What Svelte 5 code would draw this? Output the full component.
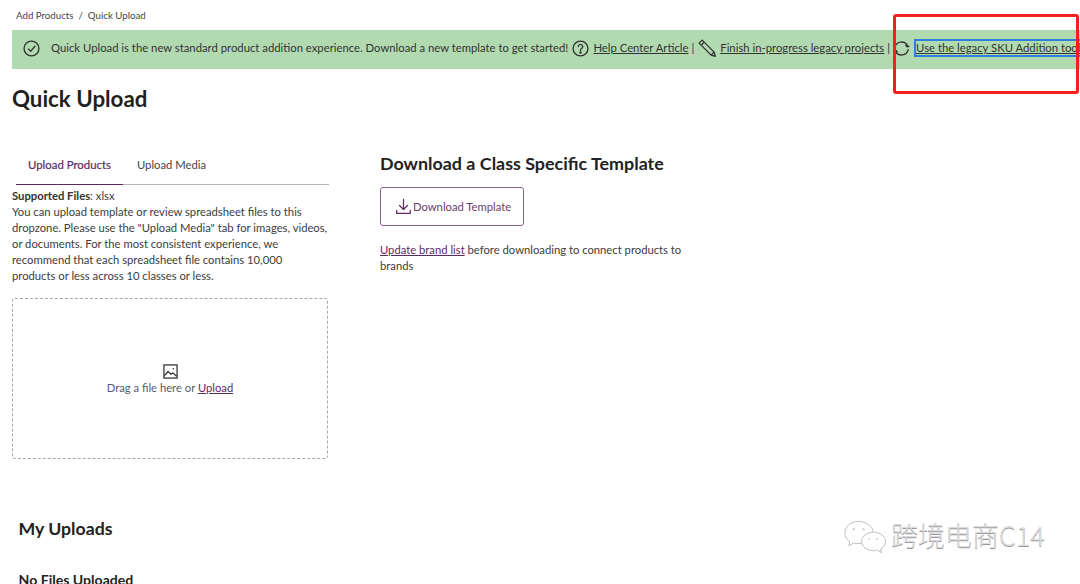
<script lang="ts">
  let activeTab = $state('products');
</script>

<div class="page">
  <nav class="crumbs">Add Products<span class="sep">/</span>Quick Upload</nav>

  <div class="banner">
    <svg class="ic check" viewBox="0 0 24 24" fill="none" stroke="currentColor" stroke-width="1.9" aria-hidden="true">
      <circle cx="12" cy="12" r="10.500"></circle>
      <polyline points="7.500 12.500 10.800 15.800 16.800 8.800" stroke-linecap="round" stroke-linejoin="round"></polyline>
    </svg>
    <span class="msg">Quick Upload is the new standard product addition experience. Download a new template to get started!</span>
    <svg class="ic help" viewBox="0 0 24 24" fill="none" stroke="currentColor" stroke-width="1.9" aria-hidden="true">
      <circle cx="12" cy="12" r="10.500"></circle>
      <path d="M8.900 9.300a3.100 3.100 0 1 1 4.700 2.700c-1 .6-1.600 1.200-1.600 2.600" stroke-linecap="round"></path>
      <circle cx="12" cy="17.800" r="0.800" fill="currentColor"></circle>
    </svg>
    <a href="#help" class="blink">Help Center Article</a>
    <span class="pipe">|</span>
    <svg class="ic pencil" viewBox="0 0 24 24" fill="none" stroke="currentColor" stroke-width="1.8" stroke-linejoin="round" aria-hidden="true">
      <path d="M1.500 5.500 5.500 1.500 21.500 17.500 23 23 17.500 21.500z"></path>
      <path d="M4 8.500 8.500 4M17.500 21.500l4-4"></path>
    </svg>
    <a href="#finish" class="blink">Finish in-progress legacy projects</a>
    <span class="pipe">|</span>
    <svg class="ic sync" viewBox="0 0 24 24" fill="none" stroke="currentColor" stroke-width="1.9" stroke-linecap="round" stroke-linejoin="round" aria-hidden="true">
      <path d="M2.500 10.500A9.700 9.700 0 0 1 20.500 8"></path>
      <path d="M21.500 13.500A9.700 9.700 0 0 1 3.500 16"></path>
      <polyline points="22.500 9 20 9.500 18 7.500"></polyline>
      <polyline points="1.500 15 4 14.500 6 16.500"></polyline>
    </svg>
    <a href="#legacy" class="blink focused">Use the legacy SKU Addition tool</a>
  </div>

  <h1>Quick Upload</h1>

  <div class="columns">
    <section class="left">
      <div class="tabs">
        <button class="tab" class:on={activeTab === 'products'} onclick={() => (activeTab = 'products')}>Upload Products</button>
        <button class="tab" class:on={activeTab === 'media'} onclick={() => (activeTab = 'media')}>Upload Media</button>
      </div>
      <div class="copy">
        <p><strong>Supported Files</strong>: xlsx</p>
        <p>You can upload template or review spreadsheet files to this dropzone. Please use the "Upload Media" tab for images, videos, or documents. For the most consistent experience, we recommend that each spreadsheet file contains 10,000 products or less across 10 classes or less.</p>
      </div>
      <div class="drop">
        <svg class="img-ic" viewBox="0 0 16 16" fill="none" stroke="#2b2b2b" stroke-width="1.300" aria-hidden="true">
          <rect x="1" y="1" width="14" height="14"></rect>
          <path d="M1.500 12.500 5.500 8l3 3 2-1.500 4 3.500" stroke-linejoin="round"></path>
          <circle cx="11" cy="5" r="0.800" fill="#2b2b2b" stroke="none"></circle>
        </svg>
        <span>Drag a file here or <a href="#upload" class="plink">Upload</a></span>
      </div>
    </section>

    <section class="right">
      <h2>Download a Class Specific Template</h2>
      <button class="dl">
        <svg viewBox="0 0 18 18" fill="none" stroke="#5f2a62" stroke-width="1.300" stroke-linecap="round" stroke-linejoin="round" aria-hidden="true">
          <path d="M9 1.500v10.500M4.800 8 9 12.200 13.200 8"></path>
          <path d="M1.800 13v3.200h14.400V13"></path>
        </svg>
        Download Template
      </button>
      <p class="note"><a href="#brands" class="plink">Update brand list</a> before downloading to connect products to brands</p>
    </section>
  </div>

  <h2 class="mine">My Uploads</h2>
  <h3>No Files Uploaded</h3>

  <div class="redbox"></div>
  <div class="mark">
    <svg viewBox="0 0 44 36" fill="#fff" stroke="#bdbdbd" stroke-width="1" aria-hidden="true">
      <path d="M15 2C7 2 1 7 1 14c0 4 2 7 5 9l-1 4 5-3c2 .6 3 .7 5 .7 8 0 15-5 15-11S23 2 15 2z"></path>
      <path d="M30 13c-6.500 0-12 4.300-12 9.500S23.500 32 30 32c1.500 0 3-.3 4-.6l4.500 2.600-1-3.700c3-1.800 5-4.700 5-7.800C42.500 17.300 36.500 13 30 13z"></path>
      <circle cx="10" cy="10" r="1.200" stroke="none" fill="#cfcfcf"></circle>
      <circle cx="20" cy="10" r="1.200" stroke="none" fill="#cfcfcf"></circle>
      <circle cx="26" cy="20" r="1" stroke="none" fill="#cfcfcf"></circle>
      <circle cx="34" cy="20" r="1" stroke="none" fill="#cfcfcf"></circle>
    </svg>
    <span>跨境电商C14</span>
  </div>
</div>

<style>
  :global(body) {
    margin: 0;
    background: #fff;
  }

  .page {
    position: relative;
    height: 584px;
    overflow: hidden;
    font-family: Lato, "Noto Sans", sans-serif;
    font-size: 11.25px;
    line-height: 16px;
    color: #3c3c3c;
    padding: 9px 0 0 12px;
    box-sizing: border-box;
  }

  .crumbs {
    padding-left: 4px;
    font-size: 9.7px;
    height: 14px;
    line-height: 12px;
    color: #444;
  }
  .sep {
    margin: 0 5px;
  }

  /* banner */
  .banner {
    margin-top: 7px;
    height: 39px;
    background: #b2dab1;
    display: flex;
    align-items: center;
    padding: 0 0 3px 11px;
    box-sizing: border-box;
    white-space: nowrap;
    overflow: hidden;
    color: #333;
    font-size: 11.3px;
  }
  .ic {
    flex: none;
    width: 17px;
    height: 17px;
    color: #333;
  }
  .msg,
  .banner .blink,
  .pipe {
    margin-bottom: 1px;
  }
  .msg {
    margin-left: 11px;
  }
  .help {
    margin-left: 4px;
    margin-right: 4px;
  }
  .blink {
    color: #333;
    text-decoration: underline;
  }
  .pipe {
    margin-left: 3px;
    margin-right: 3px;
  }
  .pencil {
    width: 18px;
    height: 18px;
    margin-left: 1px;
    margin-right: 4px;
  }
  .sync {
    margin-right: 5px;
  }
  .banner .focused {
    margin-bottom: 0;
    outline: 2px solid #2f7de1;
    outline-offset: -1px;
    padding: 1px 1px;
    line-height: 14px;
  }

  h1 {
    margin: 17px 0 0;
    font-size: 22.3px;
    line-height: 26px;
    font-weight: 700;
    color: #1f1f1f;
  }

  .columns {
    display: flex;
    margin-top: 33px;
  }

  /* left */
  .left {
    width: 316px;
    flex: none;
  }
  .tabs {
    display: flex;
    width: 313px;
    margin-left: 4px;
    border-bottom: 1px solid #b5b5b5;
  }
  .tab {
    font: inherit;
    color: #444;
    background: none;
    border: 0;
    padding: 0 12px;
    height: 40px;
    cursor: pointer;
    margin-bottom: -1px;
    border-bottom: 1px solid transparent;
  }
  .tab:not(.on) {
    margin-left: 2px;
  }
  .tab.on {
    color: #5f2a62;
    font-size: 11.4px;
    -webkit-text-stroke: 0.2px #5f2a62;
    border-bottom: 1px solid #5f2a62;
  }
  .copy {
    margin-top: 3px;
  }
  .copy p {
    margin: 0;
  }
  .copy strong {
    font-weight: 700;
    color: #333;
  }

  .drop {
    margin-top: 14px;
    height: 161px;
    border: 1px dashed #a8a8a8;
    border-radius: 3px;
    box-sizing: border-box;
    display: flex;
    flex-direction: column;
    align-items: center;
    justify-content: center;
    gap: 1px;
    color: #565a6b;
  }
  .img-ic {
    width: 15px;
    height: 15px;
    margin-top: 2px;
  }
  .plink {
    color: #5f2a62;
    text-decoration: underline;
  }

  /* right */
  .right {
    margin-left: 52px;
    width: 310px;
  }
  h2 {
    margin: 0;
    font-size: 17.9px;
    line-height: 22px;
    font-weight: 700;
    color: #222;
  }
  .right h2 {
    margin-top: 7px;
  }
  .dl {
    margin-top: 13px;
    width: 144px;
    height: 39px;
    display: flex;
    align-items: center;
    padding: 0 0 0 14px;
    gap: 1px;
    font: inherit;
    color: #6b3d6e;
    background: #fff;
    border: 1px solid #8e5f91;
    border-radius: 3px;
    box-sizing: border-box;
    white-space: nowrap;
  }
  .dl svg {
    width: 17px;
    height: 17px;
    flex: none;
  }
  .note {
    margin: 16px 0 0;
  }

  .mine {
    margin: 59px 0 0 6.500px;
    font-size: 17.7px;
  }
  h3 {
    margin: 31px 0 0 6.500px;
    font-size: 14.1px;
    line-height: 18px;
    font-weight: 700;
    color: #222;
  }

  /* annotation + watermark sit on top of the page */
  .redbox {
    position: absolute;
    left: 893px;
    top: 14px;
    width: 186px;
    height: 80px;
    box-sizing: border-box;
    border: 3px solid #f5201c;
    border-radius: 3px;
  }
  .mark {
    position: absolute;
    left: 844px;
    top: 517px;
    display: flex;
    align-items: center;
    gap: 4px;
    color: #dcdcdc;
    font-family: "Noto Sans CJK SC", sans-serif;
    font-size: 27px;
    font-weight: 300;
    line-height: 36px;
    text-shadow: 0 1px 0 #9a9a9a;
  }
  .mark span {
    margin-bottom: 4px;
  }
  .mark svg {
    width: 43px;
    height: 36px;
    flex: none;
  }
</style>
